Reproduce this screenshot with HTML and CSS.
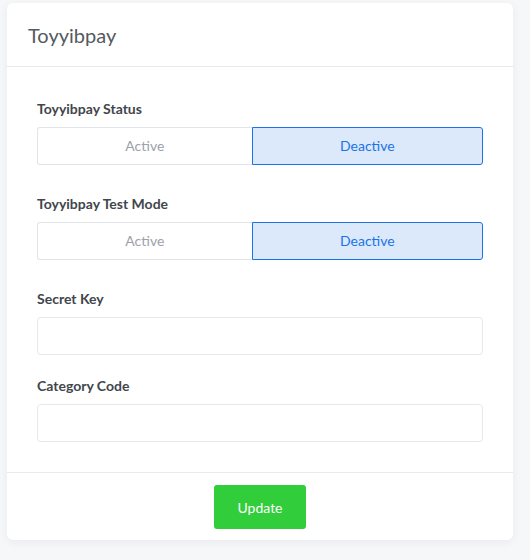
FILE: index.html
```html
<!DOCTYPE html>
<html>
<head>
<meta charset="utf-8">
<link rel="stylesheet" href="styles.css">
</head>
<body>
<div class="page">
  <div class="card">
    <div class="card-header">Toyyibpay</div>
    <div class="card-body">
      <div class="group group-toggle">
        <div class="label">Toyyibpay Status</div>
        <div class="toggle">
          <div class="seg">Active</div>
          <div class="seg seg-on">Deactive</div>
        </div>
      </div>
      <div class="group group-toggle">
        <div class="label">Toyyibpay Test Mode</div>
        <div class="toggle">
          <div class="seg">Active</div>
          <div class="seg seg-on">Deactive</div>
        </div>
      </div>
      <div class="group group-input">
        <div class="label">Secret Key</div>
        <input class="input" type="text">
      </div>
      <div class="group group-input last">
        <div class="label">Category Code</div>
        <input class="input" type="text">
      </div>
    </div>
    <div class="card-footer">
      <button class="btn">Update</button>
    </div>
  </div>
</div>
</body>
</html>
```

FILE: styles.css
```css
html, body {
  margin: 0;
  padding: 0;
  background: #f6f7f9;
  font-family: Lato, "Open Sans", sans-serif;
}
.page {
  padding: 3px 17px 20px 7px;
}
.card {
  background: #fff;
  border-radius: 6px;
  box-shadow: 0 2px 10px rgba(30, 40, 60, 0.06);
}
.card-header {
  padding: 20px 20px 19px 21px;
  font-size: 20px;
  line-height: 24px;
  color: #555a60;
  border-bottom: 1px solid #e9eaec;
}
.card-body {
  padding: 32px 30px 30px 30px;
}
.label {
  font-size: 14px;
  font-weight: 700;
  color: #41464c;
  line-height: 20px;
  margin-bottom: 8px;
}
.group-toggle {
  margin-bottom: 29px;
}
.group-input {
  margin-bottom: 21px;
}
.group.last {
  margin-bottom: 0;
}
.toggle {
  display: flex;
  height: 38px;
  box-sizing: border-box;
}
.seg {
  flex: 1 1 auto;
  display: flex;
  align-items: center;
  justify-content: center;
  font-size: 14px;
  line-height: 1;
  padding-bottom: 1px;
  color: #9da1a8;
  border: 1px solid #e1e4e8;
  border-right: none;
  border-radius: 3px 0 0 3px;
}
.seg-on {
  color: #1a73e8;
  background: #dce9fb;
  border: 1px solid #1a73e8;
  border-radius: 0 3px 3px 0;
}
.input {
  display: block;
  width: 100%;
  box-sizing: border-box;
  height: 38px;
  border: 1px solid #e8e8ea;
  border-radius: 4px;
  background: #fff;
  outline: none;
  font-family: inherit;
  font-size: 14px;
  padding: 0 12px;
}
.card-footer {
  border-top: 1px solid #e9eaec;
  padding: 12px 0 11px;
  display: flex;
  justify-content: center;
}
.btn {
  width: 92px;
  height: 44px;
  border: none;
  border-radius: 3px;
  background: #31cd3a;
  color: #fff;
  font-family: inherit;
  font-size: 14px;
  font-weight: 400;
  cursor: pointer;
}
```
